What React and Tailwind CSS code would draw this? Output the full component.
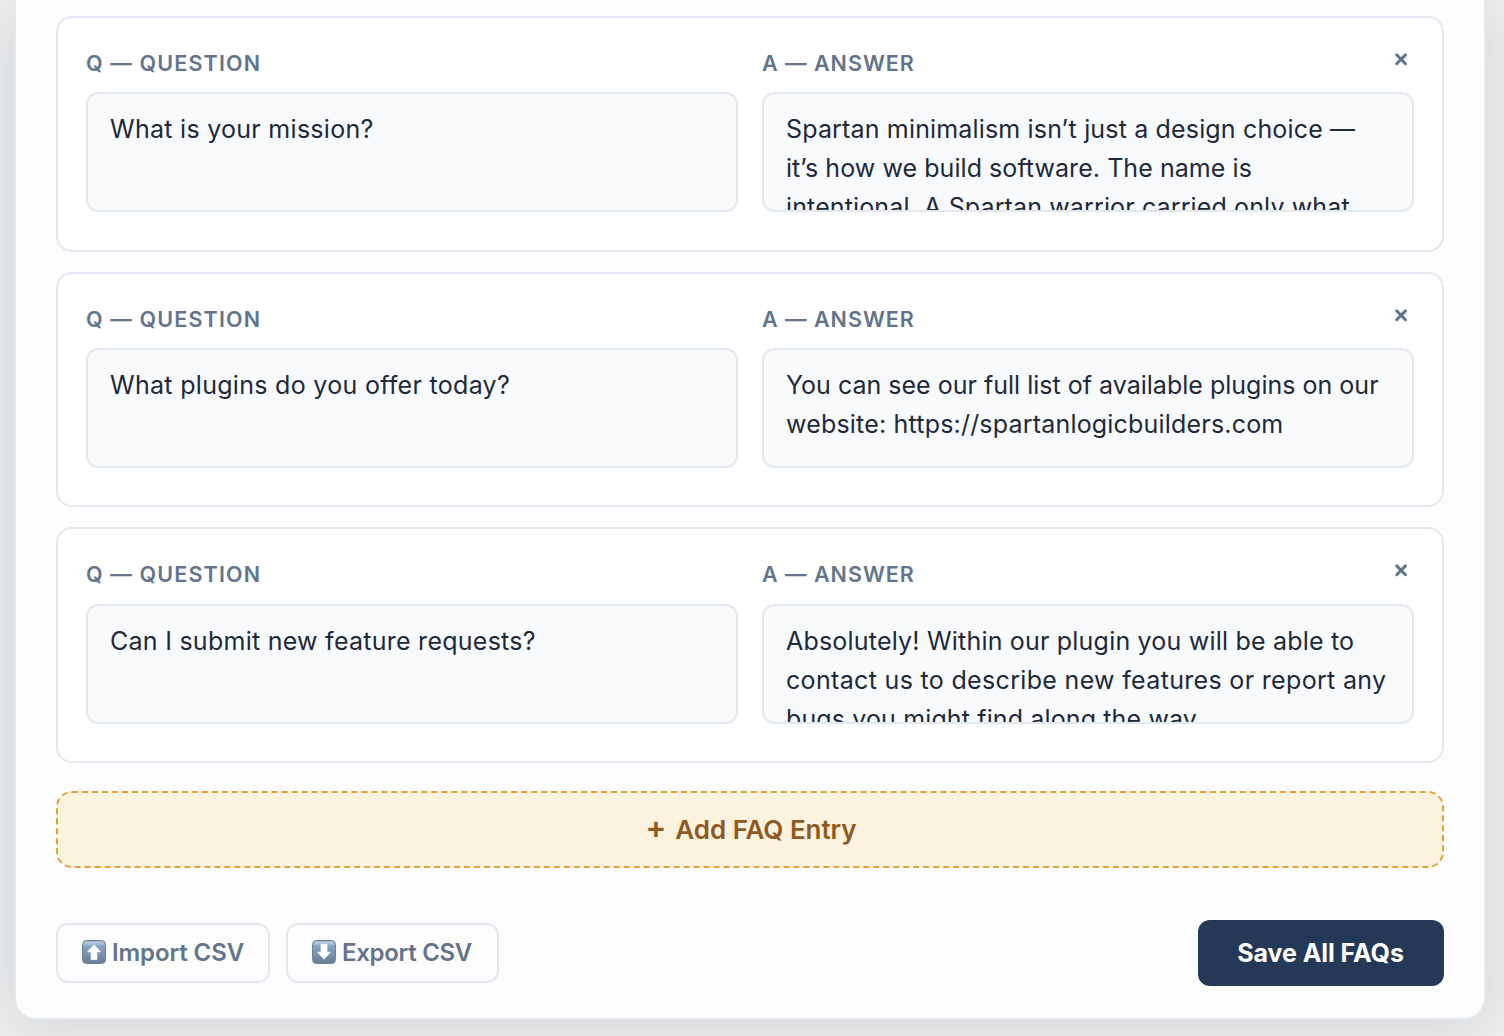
import { useState } from "react";

const initialFaqs = [
    {
        id: 1,
        question: [{ text: "What is your mission?", className: "tracking-[0.28px]" }],
        answer: [
            { text: "Spartan minimalism isn’t just a design choice —", className: "tracking-[0.16px]" },
            { text: "it’s how we build software. The name is", className: "tracking-[0.06px]" },
            { text: "intentional. A Spartan warrior carried only what", className: "tracking-[0.13px]" },
        ],
    },
    {
        id: 2,
        question: [{ text: "What plugins do you offer today?", className: "tracking-[0.3px]" }],
        answer: [
            { text: "You can see our full list of available plugins on our", className: "tracking-[0.01px]" },
            { text: "website: https://spartanlogicbuilders.com", className: "tracking-[0.19px]" },
        ],
    },
    {
        id: 3,
        question: [{ text: "Can I submit new feature requests?", className: "tracking-[0.26px]" }],
        answer: [
            { text: "Absolutely! Within our plugin you will be able to", className: "tracking-[0.2px]" },
            { text: "contact us to describe new features or report any", className: "tracking-[0.33px]" },
            { text: "bugs you might find along the way.", className: "tracking-[0.13px]" },
        ],
    },
];

const Field = ({ label, labelClass, lines }) => {
    return (
        <div className="flex-1 min-w-0">
            <p className={`h-[28px] mb-[15.15px] text-[21.5px] leading-[28px] font-semibold text-[#64748b] whitespace-nowrap ${labelClass}`}>
                {label}
            </p>
            <div className="h-[120px] overflow-hidden rounded-xl border-2 border-[#e2e8f0] bg-[#f8fafc] px-[22px] pt-4 text-[25px] leading-[39px] text-[#1e293b]">
                {lines.map((line, index) => (
                    <p key={index} className={`whitespace-nowrap ${line.className}`}>
                        {line.text}
                    </p>
                ))}
            </div>
        </div>
    );
};

const FaqCard = ({ faq, onRemove }) => {
    return (
        <div className="relative flex gap-6 h-[235.5px] rounded-2xl border-2 border-[#e2e8f0] bg-white px-7 pt-[31px]">
            <Field label="Q — QUESTION" labelClass="tracking-[1.15px]" lines={faq.question} />
            <Field label="A — ANSWER" labelClass="tracking-[1px]" lines={faq.answer} />
            <button type="button" aria-label="Remove" onClick={onRemove} className="absolute top-[31px] right-[31px] size-5 flex items-center justify-center text-[#64748b]">
                <svg viewBox="0 0 12 12" className="size-3 overflow-visible" fill="none" stroke="currentColor" strokeWidth="3" strokeLinecap="round">
                    <path d="M1.7 1.9 10.5 10.7M10.5 1.9 1.7 10.7" />
                </svg>
            </button>
        </div>
    );
};

// Glossy keycap with an arrow, used on the CSV buttons
const ArrowKey = ({ id, down }) => {
    return (
        <svg viewBox="0 0 24 24" className="size-6 shrink-0 -mt-[2px]">
            <defs>
                <linearGradient id={id} x1="0" y1="0" x2="0" y2="1">
                    <stop offset="0" stopColor="#9fb2c6" />
                    <stop offset="0.1" stopColor="#b4c8da" />
                    <stop offset="0.26" stopColor="#86a3c3" />
                    <stop offset="1" stopColor="#667b96" />
                </linearGradient>
            </defs>
            <rect x="0.5" y="0.5" width="23" height="23" rx="4" fill={`url(#${id})`} stroke="#6b809a" />
            <path
                d="M12 4.8 18.4 11.8H14.9V19.6H9.1V11.8H5.6Z"
                fill="#fff"
                stroke="#fff"
                strokeWidth="0.8"
                strokeLinejoin="round"
                transform={down ? "rotate(180 12 12)" : undefined}
            />
        </svg>
    );
};

const App = () => {
    const [faqs, setFaqs] = useState(initialFaqs);

    const removeFaq = (id) => {
        setFaqs(faqs.filter((faq) => faq.id !== id));
    };

    return (
        <div className="h-[1036px] overflow-hidden bg-[#f0f0f0] pl-[14px] pr-[18px] font-['Inter',sans-serif]">
            <div className="h-[1020px] rounded-b-[22px] border-2 border-t-0 border-[#e2e8f0] bg-[#fdfdfd] px-10 pt-[16.25px] shadow-[0_8px_64px_rgba(15,23,42,0.14)]">
                <div className="flex flex-col gap-[20.1px]">
                    {faqs.map((faq) => (
                        <FaqCard key={faq.id} faq={faq} onRemove={() => removeFaq(faq.id)} />
                    ))}
                </div>

                <button type="button" className="mt-[28.05px] w-full h-[77px] flex items-center justify-center pl-[2px] pt-px rounded-2xl border-2 border-dashed border-[#dfa23c] bg-[#fcf3df] text-[26px] font-semibold text-[#8f5a22]">
                    <span className="mr-[9px] text-[31px] leading-none -mt-[6px]">+</span>
                    <span className="tracking-[-0.05px]">Add FAQ Entry</span>
                </button>

                <div className="mt-[52px] flex items-center justify-between">
                    <div className="flex gap-4">
                        <button type="button" className="flex items-center gap-[6px] w-[214px] h-[60px] pl-6 rounded-xl border-2 border-[#e2e8f0] text-[24px] font-semibold text-[#64748b] whitespace-nowrap">
                            <ArrowKey id="key-up" />
                            <span className="pt-px tracking-[-0.1px]">Import CSV</span>
                        </button>
                        <button type="button" className="flex items-center gap-[6px] w-[213px] h-[60px] pl-6 rounded-xl border-2 border-[#e2e8f0] text-[24px] font-semibold text-[#64748b] whitespace-nowrap">
                            <ArrowKey id="key-down" down />
                            <span className="pt-px tracking-[-0.3px]">Export CSV</span>
                        </button>
                    </div>
                    <button type="button" className="w-[246px] h-[66px] pt-[2px] pr-px rounded-xl bg-[#243858] text-[25px] font-bold text-white whitespace-nowrap">
                        <span className="tracking-[-0.05px]">Save All FAQs</span>
                    </button>
                </div>
            </div>
        </div>
    );
};

export default App;
